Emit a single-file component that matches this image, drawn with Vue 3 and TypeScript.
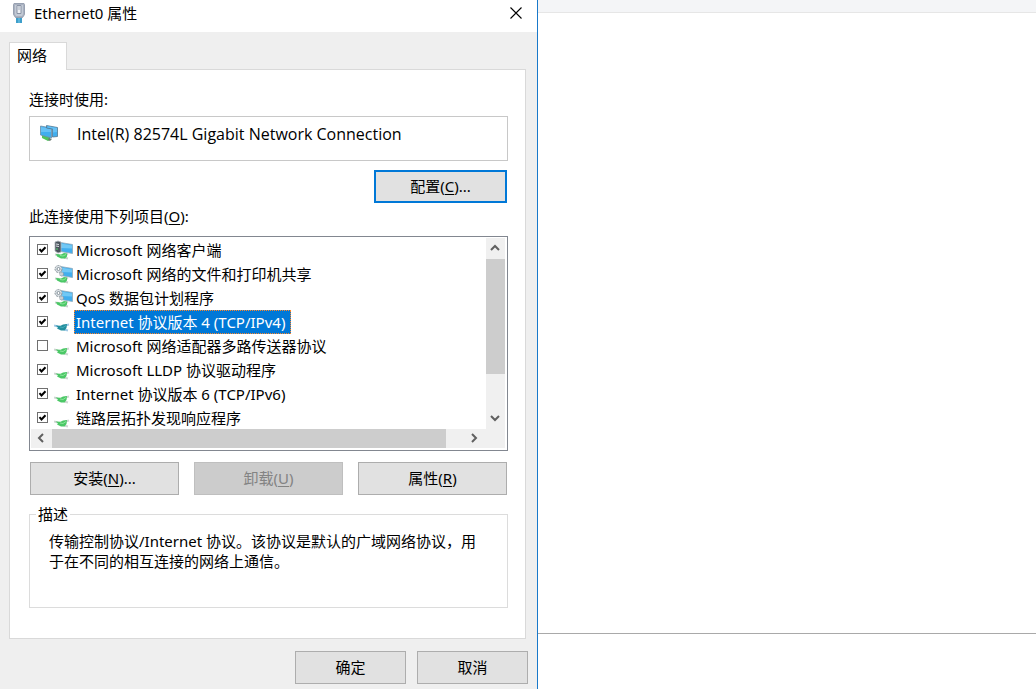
<script setup lang="ts">
import { ref } from 'vue'

type IconKind = 'client' | 'service' | 'protocol'

interface NetworkItem {
  id: string
  label: string
  icon: IconKind
  enabled: boolean
}

const items = ref<NetworkItem[]>([
  { id: 'client', label: 'Microsoft 网络客户端', icon: 'client', enabled: true },
  { id: 'sharing', label: 'Microsoft 网络的文件和打印机共享', icon: 'service', enabled: true },
  { id: 'qos', label: 'QoS 数据包计划程序', icon: 'service', enabled: true },
  { id: 'ipv4', label: 'Internet 协议版本 4 (TCP/IPv4)', icon: 'protocol', enabled: true },
  { id: 'mux', label: 'Microsoft 网络适配器多路传送器协议', icon: 'protocol', enabled: false },
  { id: 'lldp', label: 'Microsoft LLDP 协议驱动程序', icon: 'protocol', enabled: true },
  { id: 'ipv6', label: 'Internet 协议版本 6 (TCP/IPv6)', icon: 'protocol', enabled: true },
  { id: 'lltd', label: '链路层拓扑发现响应程序', icon: 'protocol', enabled: true },
])

const selected = ref('ipv4')
</script>

<template>
  <div class="screen">
    <section class="dialog" role="dialog" aria-labelledby="dialog-title">
      <header class="titlebar">
        <svg class="plug" viewBox="0 0 14 20" aria-hidden="true">
          <path d="M4 14h6v6H4z" fill="#58b4dc" />
          <path d="M5 14v6M9 14v6" stroke="#2489b8" stroke-width="1" />
          <path d="M2 .5h10l.5 1v10l-2 3h-7l-2-3v-10z" fill="#a9b1c0" stroke="#98a1b1" />
          <path d="M3 2h8v9l-1 2H4l-1-2z" fill="#c3cad5" />
          <path d="M5 2.500h4v8H5z" fill="#eef1f5" stroke="#8a93a5" />
          <path d="M7 3v4" stroke="#a4adbb" />
        </svg>
        <h1 id="dialog-title">Ethernet0 属性</h1>
        <button class="close" type="button" aria-label="关闭">
          <svg viewBox="0 0 12 12" aria-hidden="true"><path d="M.5.5l11 11M11.500.5l-11 11" stroke="#000" stroke-width="1.100" /></svg>
        </button>
      </header>

      <div class="body">
        <div class="tabs" role="tablist">
          <button class="tab" type="button" role="tab" aria-selected="true">网络</button>
        </div>

        <div class="panel" role="tabpanel">
          <p class="caption">连接时使用:</p>
          <div class="adapter">
            <svg class="adapter-icon" viewBox="0 0 20 18" aria-hidden="true">
              <path d="M3 11l8 2v3l-2 1-6-3z" fill="#4fc55b" />
              <path d="M10 14l3 1-2 2-2-1z" fill="#6d7c73" />
              <path d="M1.500 2l11 2v10l-11-3z" fill="#41aeee" stroke="#6d8ea6" stroke-width=".8" />
              <path d="M2 3l10 2v3L2 8z" fill="#66c1f5" />
              <path d="M7.500 1.500l11 2v9l-5 .5V5l-6-1z" fill="#41aeee" stroke="#56778f" stroke-width=".8" />
              <path d="M8.500 2.300l9.500 1.700v4l-4 .5V4.500l-5.500-1z" fill="#66c1f5" />
            </svg>
            <span class="adapter-name">Intel(R) 82574L Gigabit Network Connection</span>
          </div>
          <div class="configure">
            <button class="btn btn-default" type="button"><span>配置(<u>C</u>)...</span></button>
          </div>

          <p id="items-caption" class="caption">此连接使用下列项目(<u>O</u>):</p>
          <div class="listbox">
            <ul class="items" aria-labelledby="items-caption">
              <li v-for="item in items" :key="item.id" class="item" @click="selected = item.id">
                <input :id="item.id" v-model="item.enabled" class="check" type="checkbox" />
                <svg v-if="item.icon === 'protocol'" class="item-icon" :class="{ tinted: selected === item.id }" viewBox="0 0 20 20" aria-hidden="true">
                  <path class="wire" d="M0 13.500l4 1M11 13.500l4-1M10 17.500l4 1" />
                  <path class="socket" d="M1.500 13.500l5 .2 2.500-1.200 4-.5-.5 4-2 2.500H7L3 16.500l1-1z" />
                  <path class="shine" d="M6 15l3 .5 3-2" />
                </svg>
                <svg v-else class="item-icon" viewBox="0 0 20 20" aria-hidden="true">
                  <path d="M1 14.500l4 .5M10 17.500l4 1M11 15l3-1" stroke="#c6d0ca" stroke-width="2" />
                  <path d="M2 14l5 .5 3-1.500 3 .5v3l-2 2H7l-4-2z" fill="#4bc866" />
                  <path d="M6 15.500l3 .5 3-1.500" stroke="#8be39b" fill="none" />
                  <path d="M6.500 2.500l12 2v9l-12-2z" fill="#41aeee" stroke="#8fa9bb" stroke-width=".8" />
                  <path d="M7 3.500l11 2v3L7 8z" fill="#71c8f5" />
                  <template v-if="item.icon === 'client'">
                    <path d="M1 2l3-1 3 1v10l-3 1-3-2z" fill="#4b545d" stroke="#aeb5bb" stroke-width=".8" />
                    <path d="M2 4l3 .5M2 6l3 .5" stroke="#dce1e5" />
                    <path d="M2 9h2" stroke="#53d56c" />
                  </template>
                  <template v-else>
                    <circle cx="4.500" cy="5" r="3.500" fill="#dce2e6" stroke="#8b969d" stroke-dasharray="2 1" />
                    <circle cx="4.500" cy="5" r="1.500" fill="#fff" stroke="#87939b" />
                    <circle cx="7.500" cy="10" r="2" fill="#c8d0d5" stroke="#8c979e" stroke-dasharray="1 1" />
                  </template>
                </svg>
                <label class="item-label" :class="{ selected: selected === item.id }" :for="item.id">{{ item.label }}</label>
              </li>
            </ul>
            <div class="vbar">
              <button class="arrow" type="button" aria-label="向上滚动">
                <svg viewBox="0 0 10 10" aria-hidden="true"><path d="M1 7l4-4 4 4" /></svg>
              </button>
              <div class="vthumb"></div>
              <button class="arrow" type="button" aria-label="向下滚动">
                <svg viewBox="0 0 10 10" aria-hidden="true"><path d="M1 3l4 4 4-4" /></svg>
              </button>
            </div>
            <div class="hbar">
              <button class="arrow" type="button" aria-label="向左滚动">
                <svg viewBox="0 0 10 10" aria-hidden="true"><path d="M7 1L3 5l4 4" /></svg>
              </button>
              <div class="hthumb"></div>
              <button class="arrow" type="button" aria-label="向右滚动">
                <svg viewBox="0 0 10 10" aria-hidden="true"><path d="M3 1l4 4-4 4" /></svg>
              </button>
            </div>
          </div>

          <div class="actions">
            <button class="btn" type="button"><span>安装(<u>N</u>)...</span></button>
            <button class="btn" type="button" disabled><span>卸载(<u>U</u>)</span></button>
            <button class="btn" type="button"><span>属性(<u>R</u>)</span></button>
          </div>

          <fieldset class="group">
            <legend>描述</legend>
            <p>传输控制协议/Internet 协议。该协议是默认的广域网络协议，用于在不同的相互连接的网络上通信。</p>
          </fieldset>
        </div>

        <footer class="footer">
          <button class="btn" type="button">确定</button>
          <button class="btn" type="button">取消</button>
        </footer>
      </div>
    </section>

    <main class="backdrop">
      <div class="backdrop-top"></div>
      <div class="backdrop-main"></div>
      <div class="backdrop-bottom"></div>
    </main>
  </div>
</template>

<style>
body {
  margin: 0;
  background: #fff;
}
</style>

<style scoped>
.screen {
  display: grid;
  grid-template-columns: minmax(0, 538px) minmax(0, 1fr);
  min-height: 100vh;
  font-family: 'Noto Sans', 'Noto Sans CJK SC', sans-serif;
  font-size: 15px;
  line-height: 20px;
  color: #000;
}

.screen * {
  box-sizing: border-box;
}

button {
  font: inherit;
  color: inherit;
}

p,
h1,
ul {
  margin: 0;
  padding: 0;
}

u {
  text-underline-offset: 2px;
  text-decoration-thickness: 1px;
}

.dialog {
  display: flex;
  flex-direction: column;
  border-right: 1px solid #1979ca;
  background: #efefef;
}

.titlebar {
  display: flex;
  align-items: center;
  height: 32px;
  padding: 0 15px 6px 12px;
  background: #fff;
}

.plug {
  width: 14px;
  height: 20px;
  margin-right: 8px;
}

.titlebar h1 {
  flex: 1;
  font-size: 15px;
  font-weight: 400;
}

.close {
  display: flex;
  padding: 0;
  border: 0;
  background: none;
}

.close svg {
  width: 12px;
  height: 12px;
}

.body {
  flex: 1;
  padding: 10px 9px 5px;
}

.tabs {
  display: flex;
}

.tab {
  width: 58px;
  height: 28px;
  margin-bottom: -1px;
  padding: 0 0 4px 7px;
  border: 1px solid #d9d9d9;
  border-bottom: 0;
  background: #fff;
  text-align: left;
  z-index: 1;
}

.panel {
  margin-right: 2px;
  padding: 19px 17px 30px 19px;
  border: 1px solid #d9d9d9;
  background: #fff;
}

.caption {
  line-height: 20px;
}

.adapter {
  display: flex;
  height: 45px;
  margin-top: 7px;
  padding: 7px 9px;
  border: 1px solid #c8c8c8;
}

.adapter-icon {
  width: 20px;
  height: 18px;
  margin-right: 18px;
}

.adapter-name {
  font-family: 'Open Sans', sans-serif;
  font-size: 16px;
}

.configure {
  display: flex;
  justify-content: flex-end;
  margin: 9px 1px 3px;
}

.btn {
  display: flex;
  align-items: center;
  justify-content: center;
  height: 33px;
  padding: 0 0 2px;
  border: 1px solid #adadad;
  background: #e1e1e1;
}

.btn:disabled {
  border-color: #bfbfbf;
  background: #ccc;
  color: #838383;
}

.btn-default {
  width: 133px;
  border: 2px solid #0078d7;
}

.listbox {
  display: grid;
  grid-template-columns: minmax(0, 1fr) 19px;
  grid-template-rows: 191px 19px;
  margin-top: 10px;
  padding: 1px 2px 2px 1px;
  border: 1px solid #828790;
}

.items {
  overflow: hidden;
  list-style: none;
}

.item {
  display: flex;
  align-items: center;
  height: 24px;
  padding-left: 6px;
}

.check {
  appearance: none;
  width: 11px;
  height: 11px;
  margin: 0 6px 2px 0;
  border: 1px solid #707070;
  background: #fff;
}

.check:checked {
  background: #fff url("data:image/svg+xml,%3Csvg xmlns='http://www.w3.org/2000/svg' viewBox='0 0 9 9'%3E%3Cpath d='M1.500 4.200L3.500 6.500L7.500 2.200' fill='none' stroke='%23000' stroke-width='2'/%3E%3C/svg%3E") center / 9px 9px no-repeat;
}

.item-icon {
  width: 20px;
  height: 20px;
}

.wire {
  fill: none;
  stroke: #cfd6d2;
  stroke-width: 2;
}

.socket {
  fill: #4bc866;
}

.shine {
  fill: none;
  stroke: #8be39b;
}

.tinted .wire {
  stroke: #9fc9e6;
}

.tinted .socket {
  fill: #238f9e;
}

.tinted .shine {
  stroke: #45abb9;
}

.item-label {
  height: 24px;
  padding: 1px 5px 1px 1px;
  border: 1px solid transparent;
  white-space: nowrap;
}

.item-label.selected {
  border: 1px dotted #ff8728;
  background: #0078d7;
  color: #fff;
}

.vbar {
  display: flex;
  flex-direction: column;
  background: #f0f0f0;
}

.vthumb {
  flex: 0 0 115px;
  background: #cdcdcd;
}

.vbar .arrow:last-child {
  margin-top: auto;
}

.hbar {
  display: flex;
  grid-column: 1 / -1;
  background: #f0f0f0;
}

.hthumb {
  flex: 0 1 394px;
  background: #cdcdcd;
}

.hbar .arrow:last-child {
  margin-left: auto;
  margin-right: 20px;
}

.arrow {
  display: flex;
  flex: 0 0 21px;
  align-items: center;
  justify-content: center;
  padding: 0 1px 1px 0;
  border: 0;
  background: none;
}

.arrow svg {
  width: 10px;
  height: 10px;
  fill: none;
  stroke: #606060;
  stroke-width: 2;
}

.actions {
  display: grid;
  grid-template-columns: repeat(3, 1fr);
  gap: 15px;
  margin: 11px 1px 9px;
}

.group {
  min-width: 0;
  height: 104px;
  margin: 0;
  padding: 7px 19px 0;
  border: 1px solid #dcdcdc;
}

.group legend {
  margin-left: -13px;
  padding: 0 2px;
}

.footer {
  display: flex;
  justify-content: flex-end;
  gap: 11px;
  margin-top: 12px;
}

.footer .btn {
  width: 111px;
}

.backdrop {
  display: flex;
  flex-direction: column;
}

.backdrop-top {
  height: 13px;
  border-bottom: 1px solid #e6e6e6;
  background: #f4f5f7;
}

.backdrop-main {
  flex: 1;
}

.backdrop-bottom {
  height: 56px;
  border-top: 1px solid #a9a9a9;
}
</style>
